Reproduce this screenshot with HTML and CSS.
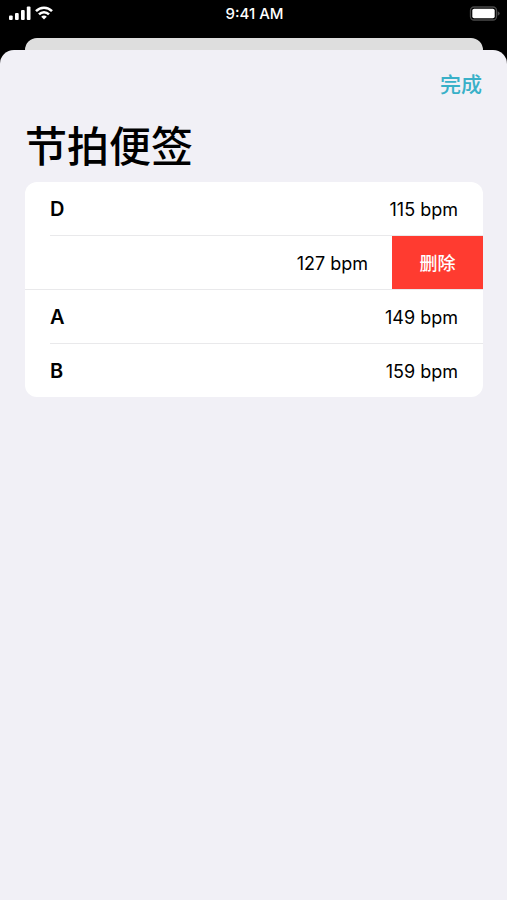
FILE: index.html
```html
<!DOCTYPE html>
<html lang="zh-CN">
<head>
<meta charset="utf-8">
<meta name="viewport" content="width=device-width, initial-scale=1">
<title>节拍便签</title>
<link rel="stylesheet" href="styles.css">
</head>
<body>
<header class="status">
  <div class="status-left">
    <svg width="22" height="14" viewBox="0 0 22 14" fill="#fff" aria-hidden="true">
      <rect x="0" y="9.500" width="3.700" height="4.500" rx="1"/>
      <rect x="6" y="7" width="3.700" height="7" rx="1"/>
      <rect x="12" y="4" width="3.700" height="10" rx="1"/>
      <rect x="17.800" y="0.500" width="3.700" height="13.500" rx="1"/>
    </svg>
    <svg width="18" height="14" viewBox="0 0 18 14" fill="none" stroke="#fff" stroke-width="2.500" aria-hidden="true">
      <path d="M1 5.100C5.400 .5 12.600 .5 17 5.100"/>
      <path d="M4 8.300C6.800 5.400 11.200 5.400 14 8.300"/>
      <path d="M9 13.600L6.200 10.700C7.800 9.200 10.200 9.200 11.800 10.700Z" fill="#fff" stroke="none"/>
    </svg>
  </div>
  <time class="clock">9:41 AM</time>
  <div class="status-right">
    <svg width="31" height="15" viewBox="0 0 31 15" aria-hidden="true">
      <rect x="1.500" y="1" width="26" height="13" rx="3.500" fill="none" stroke="#4a4a4a" stroke-width="1.300"/>
      <rect x="3.300" y="2.700" width="22.400" height="9.600" rx="1.800" fill="#fff"/>
      <path d="M28.700 5.200Q30.700 6 30.700 7.500T28.700 9.800Z" fill="#4a4a4a"/>
    </svg>
  </div>
</header>
<div class="behind"></div>
<main class="sheet">
  <nav class="toolbar"><button class="done" type="button">完成</button></nav>
  <h1>节拍便签</h1>
  <ul class="list">
    <li class="row"><span class="name">D</span><span class="bpm">115 bpm</span></li>
    <li class="row swiped"><span class="bpm">127 bpm</span><button class="delete" type="button">删除</button></li>
    <li class="row"><span class="name">A</span><span class="bpm">149 bpm</span></li>
    <li class="row"><span class="name">B</span><span class="bpm">159 bpm</span></li>
  </ul>
</main>
</body>
</html>
```
FILE: styles.css
```css
* {
  box-sizing: border-box;
}

body {
  margin: 0;
  min-height: 100vh;
  display: flex;
  flex-direction: column;
  background: #000;
  color: #000;
  font-family: Inter, "Noto Sans CJK SC", sans-serif;
}

button {
  border: 0;
  padding: 0;
  font-family: inherit;
  cursor: pointer;
}

.status {
  display: grid;
  grid-template-columns: 1fr auto 1fr;
  align-items: center;
  height: 38px;
  padding: 0 7px 12px 9px;
  color: #fff;
}

.status-left {
  display: flex;
  gap: 4px;
}

.status-right {
  display: flex;
  justify-content: flex-end;
}

.clock {
  padding-top: 2px;
  font-size: 15px;
  font-weight: 500;
  line-height: 20px;
}

.behind {
  height: 12px;
  margin: 0 24px 0 25px;
  border-radius: 12px 12px 0 0;
  background: #dedede;
}

.sheet {
  flex: 1;
  padding: 20px 24px 20px 25px;
  border-radius: 14px 14px 0 0;
  background: #f1f0f6;
}

.toolbar {
  display: flex;
  justify-content: flex-end;
}

.done {
  padding: 0 1px 0 0;
  background: none;
  color: #39b0c8;
  font-size: 21px;
  font-weight: 500;
  line-height: 30px;
}

h1 {
  margin: 17px 0 5px;
  font-size: 42px;
  font-weight: 500;
  line-height: 60px;
}

.list {
  margin: 0;
  padding: 0;
  overflow: hidden;
  list-style: none;
  border-radius: 12px;
  background: #fff;
}

.row {
  display: flex;
  align-items: center;
  justify-content: space-between;
  height: 54px;
  margin-left: 25px;
  padding-right: 25px;
  border-bottom: 1px solid #e9e9eb;
}

.row:last-child {
  height: 53px;
  border-bottom: 0;
}

.swiped {
  justify-content: flex-end;
  gap: 24px;
  margin-left: 0;
  padding-right: 0;
}

.name {
  font-size: 20px;
  font-weight: 600;
}

.bpm {
  padding-top: 2px;
  font-size: 18px;
}

.delete {
  align-self: stretch;
  width: 91px;
  padding-bottom: 2px;
  background: #ff3b30;
  color: #fff;
  font-size: 18px;
  font-weight: 500;
}
```
